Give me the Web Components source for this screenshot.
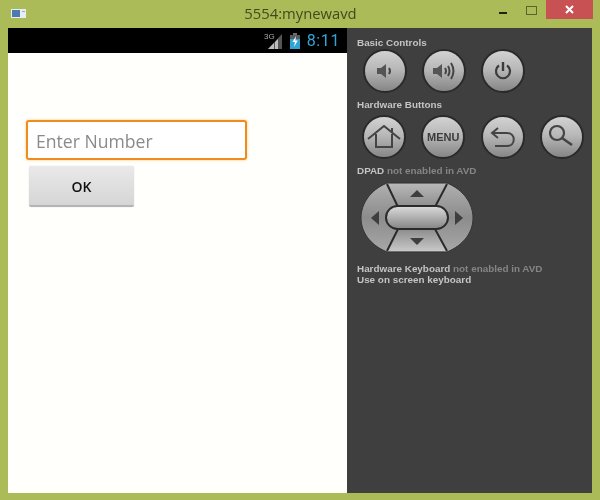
<!DOCTYPE html>
<html>
<head>
<meta charset="utf-8">
<title>5554:mynewavd</title>
<style>
  html, body { margin: 0; padding: 0; height: 100%; background: #abbb57; overflow: hidden; }
</style>
</head>
<body>
<avd-window>
  <avd-screen slot="screen"></avd-screen>
  <avd-panel slot="panel"></avd-panel>
</avd-window>

<script>
class AvdWindow extends HTMLElement {
  constructor() {
    super();
    this.attachShadow({ mode: 'open' }).innerHTML = `
      <style>
        :host { display: flex; flex-direction: column; width: 600px; height: 500px; background: #abbb57; box-sizing: border-box; filter: blur(.4px); }
        .title-bar { display: grid; grid-template-columns: 1fr auto 1fr; height: 28px; flex: none; }
        .icon { align-self: start; margin: 9px 0 0 11px; }
        .title { font: 14.8px/27px "Open Sans", sans-serif; color: #3f4a1e; margin-left: 1px; }
        .controls { display: flex; justify-content: flex-end; align-items: flex-start; padding-right: 7px; }
        .min { width: 8px; height: 2px; background: #20240f; margin: 12px 19px 0 0; }
        .max { width: 9px; height: 7px; border: 1px solid #59652b; margin: 6px 9px 0 0; }
        .close { width: 47px; height: 19px; background: #c85253; display: flex; align-items: center; justify-content: center; }
        .body { display: flex; margin: 0 8px 0 8px; height: 465px; }
      </style>
      <div class="title-bar">
        <svg class="icon" width="15" height="9" viewBox="0 0 15 9">
          <rect width="15" height="9" fill="#e8edf2"/>
          <rect x="1" y="1" width="8" height="7" fill="#4b7bb0"/>
          <rect x="11" y="2" width="3" height="1" fill="#9aa8b8"/>
        </svg>
        <div class="title">5554:mynewavd</div>
        <div class="controls">
          <div class="min"></div>
          <div class="max"></div>
          <div class="close">
            <svg width="9" height="9" viewBox="0 0 9 9"><path d="M1 1L8 8M8 1L1 8" stroke="#fff" stroke-width="2"/></svg>
          </div>
        </div>
      </div>
      <div class="body">
        <slot name="screen"></slot>
        <slot name="panel"></slot>
      </div>
    `;
  }
}

class AvdScreen extends HTMLElement {
  constructor() {
    super();
    this.attachShadow({ mode: 'open' }).innerHTML = `
      <style>
        :host { display: flex; flex-direction: column; width: 339px; height: 465px; background: #fffffb; }
        .status { height: 25px; background: #000; display: flex; align-items: center; justify-content: flex-end; padding-right: 7px; flex: none; }
        .status svg { display: block; }
        .signal { margin-right: 6px; }
        .battery { margin-right: 7px; }
        .time { font: 16px/27px Roboto, sans-serif; color: #33a5d5; letter-spacing: 0.6px; }
        .content { padding: 67px 0 0 18px; display: flex; flex-direction: column; align-items: flex-start; }
        .field { box-sizing: border-box; width: 221px; height: 40px; border: 2px solid #f08c1e; border-radius: 3px; background: #fff; box-shadow: 0 0 3px rgba(245,160,60,.6); font: 17.6px/38px "Open Sans", sans-serif; color: #8a8a8a; padding-left: 8px; }
        .ok { box-sizing: border-box; width: 105px; height: 41px; margin: 6px 0 0 3px; border-radius: 2px; background: linear-gradient(#e9e9e9, #d6d6d6); border-bottom: 2px solid #b4b4b4; box-shadow: 0 0 1px #bbb; font: 600 14px/41px "Open Sans", sans-serif; color: #111; text-align: center; }
      </style>
      <div class="status">
        <svg class="signal" width="20" height="18" viewBox="0 0 20 18">
          <text x="0" y="7" font-family="Liberation Sans" font-size="8" fill="#aaa">3G</text>
          <path d="M18 2V17H4Z" fill="#555"/>
          <path d="M10 11V17H4ZM14 7V17H11V10Z" fill="#bdbdbd"/>
        </svg>
        <svg class="battery" width="10" height="16" viewBox="0 0 10 16">
          <rect x="3" y="0" width="4" height="2" fill="#6d6d6d"/>
          <rect x="0" y="2" width="10" height="14" fill="#5a5a5a"/>
          <rect x="0" y="6" width="10" height="10" fill="#33a5d5"/>
          <path d="M6 3L2.500 9H5L4 14L7.800 7.500H5.300Z" fill="#fff"/>
        </svg>
        <span class="time">8:11</span>
      </div>
      <div class="content">
        <div class="field">Enter Number</div>
        <div class="ok">OK</div>
      </div>
    `;
  }
}

class RoundButton extends HTMLElement {
  constructor() {
    super();
    this.attachShadow({ mode: 'open' }).innerHTML = `
      <style>
        :host { display: flex; align-items: center; justify-content: center; box-sizing: border-box; width: 44px; height: 44px; border-radius: 50%; border: 2px solid #2a2a2a; background: linear-gradient(#d2d2d2 0%, #b8b8b8 45%, #868686 100%); color: #3c3c3c; font: bold 11px "Liberation Sans", sans-serif; }
      </style>
      <slot></slot>
    `;
  }
}

class AvdDpad extends HTMLElement {
  constructor() {
    super();
    this.attachShadow({ mode: 'open' }).innerHTML = `
      <style>
        :host { display: block; width: 114px; height: 73px; margin: 4px 0 0 3px; }
        svg { display: block; }
      </style>
      <svg width="114" height="73" viewBox="-1 -1 114 73">
        <defs>
          <linearGradient id="side" x1="0" y1="0" x2="0" y2="1">
            <stop offset="0" stop-color="#b0b0b0"/><stop offset=".5" stop-color="#8c8c8c"/><stop offset="1" stop-color="#a8a8a8"/>
          </linearGradient>
          <linearGradient id="up" x1="0" y1="0" x2="0" y2="1">
            <stop offset="0" stop-color="#b8b8b8"/><stop offset="1" stop-color="#8f8f8f"/>
          </linearGradient>
          <linearGradient id="down" x1="0" y1="0" x2="0" y2="1">
            <stop offset="0" stop-color="#8f8f8f"/><stop offset="1" stop-color="#c8c8c8"/>
          </linearGradient>
          <linearGradient id="pill" x1="0" y1="0" x2="0" y2="1">
            <stop offset="0" stop-color="#dcdcdc"/><stop offset=".5" stop-color="#b0b0b0"/><stop offset="1" stop-color="#858585"/>
          </linearGradient>
        </defs>
        <path d="M26 1H86C103 8 112 22 112 36C112 50 103 63 86 70H26C9 63 0 50 0 36C0 22 9 8 26 1Z" fill="url(#side)" stroke="#333" stroke-width="1"/>
        <path d="M26 2H86L74 24H37Z" fill="url(#up)"/>
        <path d="M37 48H74L86 69H26Z" fill="url(#down)"/>
        <path d="M26 2L37 25M86 2L74 25M37 47L26 69M74 47L86 69" stroke="#2b2b2b" stroke-width="2" fill="none"/>
        <rect x="25" y="24" width="62" height="23" rx="11.5" fill="url(#pill)" stroke="#2b2b2b" stroke-width="2"/>
        <path d="M56 8L63 15H49Z" fill="#3e3e3e"/>
        <path d="M56 63L63 56H49Z" fill="#3e3e3e"/>
        <path d="M10 36L18 29V43Z" fill="#3e3e3e"/>
        <path d="M102 36L94 29V43Z" fill="#3e3e3e"/>
      </svg>
    `;
  }
}

class AvdPanel extends HTMLElement {
  constructor() {
    super();
    this.attachShadow({ mode: 'open' }).innerHTML = `
      <style>
        :host { display: block; box-sizing: border-box; width: 245px; height: 465px; background: #3f3f3f; padding: 9px 0 0 10px; font: bold 9.9px/12px "Liberation Sans", sans-serif; color: #c4c4c4; }
        .label { height: 12px; }
        .off { color: #858585; }
        .row { display: flex; }
        .row.basic { gap: 15px; margin: 0 0 6px 6px; }
        .row.hardware { gap: 15.3px; margin: 4px 0 6px 5px; }
        .keyboard { margin-top: 9px; line-height: 11px; }
        svg { display: block; }
      </style>
      <div class="label">Basic Controls</div>
      <div class="row basic">
        <round-button>
          <svg width="20" height="20" viewBox="0 0 20 20"><path d="M2 7H6L11 3V17L6 13H2Z" fill="#555"/><path d="M14 7Q16 10 14 13" fill="none" stroke="#444" stroke-width="2"/></svg>
        </round-button>
        <round-button>
          <svg width="26" height="20" viewBox="0 0 26 20"><path d="M2 7H6L11 3V17L6 13H2Z" fill="#555"/><path d="M14 7Q16 10 14 13M17 5Q20 10 17 15M20 2Q25 10 20 18" fill="none" stroke="#444" stroke-width="2"/></svg>
        </round-button>
        <round-button>
          <svg width="20" height="20" viewBox="0 0 20 20"><path d="M10 1V10" stroke="#3c3c3c" stroke-width="2.4" fill="none"/><path d="M6 4.500A7 7 0 1 0 14 4.500" stroke="#3c3c3c" stroke-width="2.2" fill="none"/></svg>
        </round-button>
      </div>
      <div class="label">Hardware Buttons</div>
      <div class="row hardware">
        <round-button>
          <svg width="34" height="24" viewBox="0 0 34 24"><path d="M1 14L17 1L33 14M9 9V22H25V9M25 3V8" fill="none" stroke="#444" stroke-width="2"/></svg>
        </round-button>
        <round-button>MENU</round-button>
        <round-button>
          <svg width="26" height="20" viewBox="0 0 26 20"><path d="M8 1L2 6L8 11M2 6H17C26 6 26 19 17 19H5" fill="none" stroke="#444" stroke-width="2"/></svg>
        </round-button>
        <round-button>
          <svg width="26" height="26" viewBox="0 0 26 26"><circle cx="8" cy="9" r="7" fill="none" stroke="#444" stroke-width="2.200"/><path d="M13 14L23 21" stroke="#444" stroke-width="2.600"/></svg>
        </round-button>
      </div>
      <div class="label">DPAD <span class="off">not enabled in AVD</span></div>
      <avd-dpad></avd-dpad>
      <div class="keyboard">Hardware Keyboard <span class="off">not enabled in AVD</span><br>Use on screen keyboard</div>
    `;
  }
}

customElements.define('round-button', RoundButton);
customElements.define('avd-dpad', AvdDpad);
customElements.define('avd-screen', AvdScreen);
customElements.define('avd-panel', AvdPanel);
customElements.define('avd-window', AvdWindow);
</script>
</body>
</html>
